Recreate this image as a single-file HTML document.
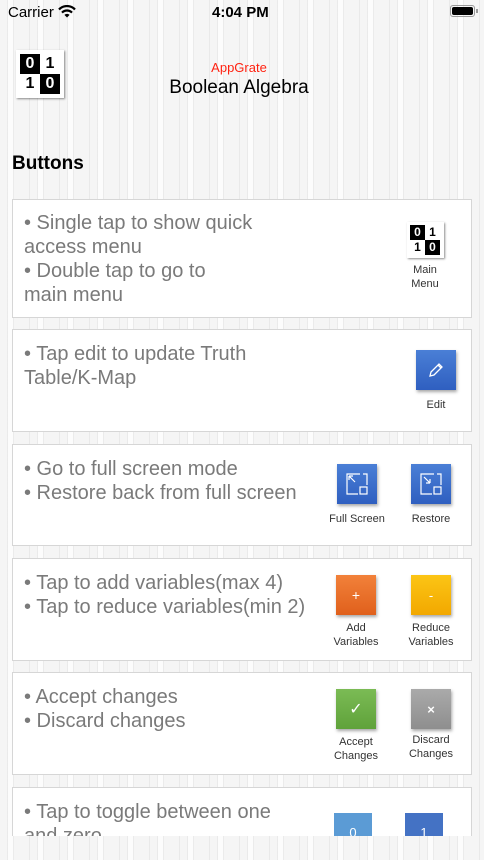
<!DOCTYPE html>
<html><head><meta charset="utf-8">
<style>
*{margin:0;padding:0;box-sizing:border-box}
html,body{width:484px;height:860px;overflow:hidden}
body{font-family:"Liberation Sans",sans-serif;position:relative;
background:#f5f5f5;
background-image:repeating-linear-gradient(90deg,rgba(255,255,255,0) 0 7px,rgba(215,215,215,.35) 7px 8px,rgba(255,255,255,.7) 8px 13px,rgba(205,205,205,.25) 13px 14px,rgba(255,255,255,0) 14px 29px,rgba(210,210,210,.35) 29px 30px);}
.abs{position:absolute}
.status{top:4px;font-size:15px;color:#000}
.logo{position:absolute;background:#fff;box-shadow:1px 1px 2px rgba(0,0,0,.45);}
.logo div{position:absolute;font-weight:bold;text-align:center;color:#000}
.logo .b{background:#000;color:#fff}
.clip{position:absolute;left:0;top:190px;width:484px;height:646px;overflow:hidden}
.card{position:absolute;left:12px;width:460px;background:#fff;border:1px solid #d6d6d6}
.txt{position:absolute;left:11px;font-size:20px;line-height:24px;color:#7a7a7a}
.btn{position:absolute;width:40px;height:40px;box-shadow:1px 2px 3px rgba(0,0,0,.35);display:flex;align-items:center;justify-content:center;color:#fff}
.lbl{position:absolute;font-size:11px;line-height:14px;color:#333;text-align:center;width:80px}
.blue{background:linear-gradient(#4a7fd6,#2f5fc0)}
</style></head><body>
<div class="abs status" style="left:8px">Carrier</div>
<svg class="abs" style="left:58px;top:5px" width="18" height="13" viewBox="0 0 18 13"><path d="M1 4.5a11 11 0 0 1 16 0" stroke="#000" stroke-width="2.2" fill="none"/><path d="M4 7.6a7 7 0 0 1 10 0" stroke="#000" stroke-width="2.2" fill="none"/><path d="M9 12.5l-2.6-2.6a3.7 3.7 0 0 1 5.2 0z" fill="#000"/></svg>
<div class="abs status" style="left:212px;font-weight:bold">4:04 PM</div>
<div class="abs" style="left:450px;top:5px;width:25px;height:12px;border:1px solid #999;border-radius:3px;padding:1px"><div style="width:100%;height:100%;background:#000;border-radius:2px"></div></div>
<div class="abs" style="left:476px;top:9px;width:2px;height:4px;background:#999"></div>

<div class="logo" style="left:16px;top:50px;width:48px;height:48px">
<div class="b" style="left:4px;top:4px;width:20px;height:20px;font-size:16px;line-height:20px">0</div>
<div style="left:24px;top:4px;width:20px;height:20px;font-size:16px;line-height:20px">1</div>
<div style="left:4px;top:24px;width:20px;height:20px;font-size:16px;line-height:20px">1</div>
<div class="b" style="left:24px;top:24px;width:20px;height:20px;font-size:16px;line-height:20px">0</div>
</div>
<div class="abs" style="left:0;width:478px;top:60px;text-align:center;color:#f21;font-size:13px">AppGrate</div>
<div class="abs" style="left:0;width:478px;top:77px;text-align:center;color:#000;font-size:19px">Boolean Algebra</div>
<div class="abs" style="left:12px;top:153px;font-size:19px;font-weight:bold;color:#000">Buttons</div>

<div class="clip">
<div class="card" style="top:9px;height:119px">
<div class="txt" style="top:11px">• Single tap to show quick<br>access menu<br>• Double tap to go to<br>main menu</div>
<div class="logo" style="left:394px;top:22px;width:37px;height:36px">
<div class="b" style="left:3px;top:3px;width:15px;height:15px;font-size:12px;line-height:15px">0</div>
<div style="left:18px;top:3px;width:15px;height:15px;font-size:12px;line-height:15px">1</div>
<div style="left:3px;top:18px;width:15px;height:15px;font-size:12px;line-height:15px">1</div>
<div class="b" style="left:18px;top:18px;width:15px;height:15px;font-size:12px;line-height:15px">0</div>
</div>
<div class="lbl" style="left:372px;top:63px">Main<br>Menu</div>
</div>

<div class="card" style="top:139px;height:103px">
<div class="txt" style="top:12px">• Tap edit to update Truth<br>Table/K-Map</div>
<div class="btn blue" style="left:403px;top:20px"><svg width="18" height="18" viewBox="0 0 18 18"><path d="M3 15l1-4 8-8 3 3-8 8z" fill="none" stroke="#fff" stroke-width="1.3"/><path d="M11 4l3 3" stroke="#fff" stroke-width="1.3"/></svg></div>
<div class="lbl" style="left:383px;top:68px">Edit</div>
</div>

<div class="card" style="top:254px;height:102px">
<div class="txt" style="top:12px">• Go to full screen mode<br>• Restore back from full screen</div>
<div class="btn blue" style="left:324px;top:19px"><svg width="24" height="24" viewBox="0 0 24 24" fill="none" stroke="#fff" stroke-width="1.2"><path d="M15 2H2v20h11"/><path d="M22 13V2h-4"/><rect x="15" y="15" width="7" height="7"/><path d="M4 4l6 6M4 4h4M4 4v4"/></svg></div>
<div class="lbl" style="left:304px;top:67px">Full Screen</div>
<div class="btn blue" style="left:398px;top:19px"><svg width="24" height="24" viewBox="0 0 24 24" fill="none" stroke="#fff" stroke-width="1.2"><path d="M15 2H2v20h11"/><path d="M22 13V2h-4"/><rect x="15" y="15" width="7" height="7"/><path d="M5 5l6 6M11 11h-4M11 11v-4"/></svg></div>
<div class="lbl" style="left:378px;top:67px">Restore</div>
</div>

<div class="card" style="top:368px;height:103px">
<div class="txt" style="top:12px">• Tap to add variables(max 4)<br>• Tap to reduce variables(min 2)</div>
<div class="btn" style="left:323px;top:16px;background:linear-gradient(#f2813a,#e0601c);font-size:14px">+</div>
<div class="lbl" style="left:303px;top:62px">Add<br>Variables</div>
<div class="btn" style="left:398px;top:16px;background:linear-gradient(#fcc515,#f2a800);font-size:13px">-</div>
<div class="lbl" style="left:378px;top:62px">Reduce<br>Variables</div>
</div>

<div class="card" style="top:482px;height:103px">
<div class="txt" style="top:12px">• Accept changes<br>• Discard changes</div>
<div class="btn" style="left:323px;top:16px;background:linear-gradient(#7bbb55,#5fa23a);font-size:16px">✓</div>
<div class="lbl" style="left:303px;top:62px">Accept<br>Changes</div>
<div class="btn" style="left:398px;top:16px;background:linear-gradient(#aaa,#8e8e8e);font-size:13px;font-weight:bold">×</div>
<div class="lbl" style="left:378px;top:60px">Discard<br>Changes</div>
</div>

<div class="card" style="top:597px;height:100px">
<div class="txt" style="top:12px">• Tap to toggle between one<br>and zero</div>
<div class="btn" style="left:321px;top:25px;width:38px;background:#5b9bd5;box-shadow:none;align-items:flex-start;padding-top:12px;font-size:13px">0</div>
<div class="btn" style="left:392px;top:25px;width:38px;background:#4472c4;box-shadow:none;align-items:flex-start;padding-top:12px;font-size:13px">1</div>
</div>
</div>
</body></html>
